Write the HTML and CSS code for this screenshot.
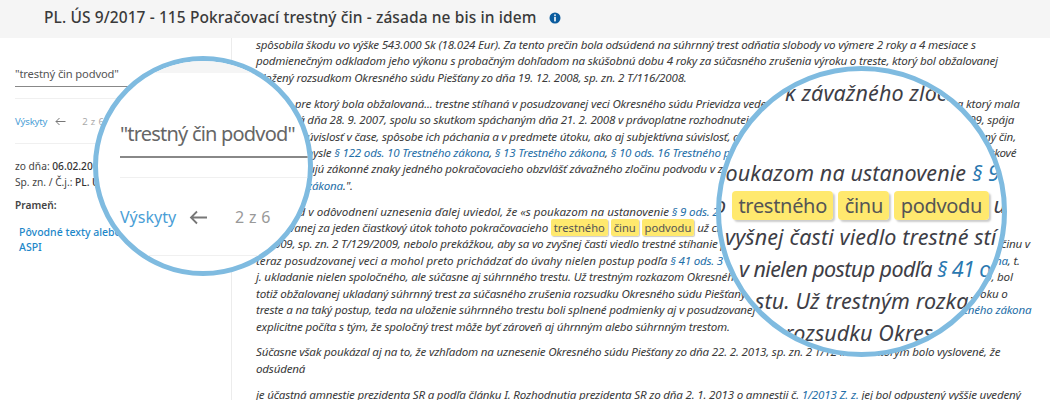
FILE: index.html
```html
<!DOCTYPE html>
<html lang="sk">
<head>
    <meta charset="UTF-8">
    <meta name="viewport" content="width=device-width, initial-scale=1.0">
    <title>PL. ÚS 9/2017</title>
    <link rel="stylesheet" href="styles.css">
</head>
<body>
    <div class="header">
        <h1>PL. ÚS 9/2017 - 115 Pokračovací trestný čin - zásada ne bis in idem</h1>
        <svg class="info" width="12" height="12" viewBox="0 0 12 12"><circle cx="6" cy="6" r="5.5" fill="#0b5c9e"/><rect x="5.2" y="2.4" width="1.6" height="1.5" fill="#fff"/><rect x="5.2" y="4.8" width="1.6" height="4.6" fill="#fff"/></svg>
    </div>

    <div class="main">
        <div class="sidebar">
            <div class="hledat">"trestný čin podvod"</div>
            <div class="vyskyty">
                <span class="vyskyty-nazov">Výskyty</span>
                <svg class="sipka" width="11" height="9" viewBox="0 0 11 9"><path d="M10.5 4.5H1M4.5 1 1 4.5 4.5 8" fill="none" stroke="#777" stroke-width="1"/></svg>
                <span class="pocet">2 z 6</span>
            </div>
            <div class="meta">
                <p>zo dňa: <b>06.02.2019</b></p>
                <p>Sp. zn. / Č.j.: <b>PL. ÚS 9/2017</b></p>
            </div>
            <div class="pramen">Prameň:</div>
            <div class="zdroje">
                <a>Pôvodné texty alebo texty</a>
                <a>ASPI</a>
            </div>
        </div>

        <div class="obsah">
            <p>spôsobila škodu vo výške 543.000 Sk (18.024 Eur). Za tento prečin bola odsúdená na súhrnný trest odňatia slobody vo výmere 2 roky a 4 mesiace s<br>
            podmienečným odkladom jeho výkonu s probačným dohľadom na skúšobnú dobu 4 roky za súčasného zrušenia výroku o treste, ktorý bol obžalovanej<br>
            uložený rozsudkom Okresného súdu Piešťany zo dňa 19. 12. 2008, sp. zn. 2 T/116/2008.</p>
            <p>Skutok, pre ktorý bola obžalovaná... trestne stíhaná v posudzovanej veci Okresného súdu Prievidza vedenej pre čin obzvlášť závažného zločinu a ktorý mala<br>
            spáchaná dňa 28. 9. 2007, spolu so skutkom spáchaným dňa 21. 2. 2008 v právoplatne rozhodnutej veci sp. zn. 2 T/116/2008 z 29. 1. 2009 z r. 2009, spája<br>
            a časová súvislosť v čase, spôsobe ich páchania a v predmete útoku, ako aj subjektívna súvislosť, a preto teda ide o jeden a ten istý pokračovací trestný čin,<br>
            skutky v zmysle <a>§ 122 ods. 10 Trestného zákona</a>, <a>§ 13 Trestného zákona</a>, <a>§ 10 ods. 16 Trestného poriadku</a>, pričom všetky jednotlivé tieto ich skutky čiastkové<br>
            teda vykazujú zákonné znaky jedného pokračovacieho obzvlášť závažného zločinu podvodu v zmysle<br>
            <a>Trestného zákona</a>.".</p>
            <p><span class="sirsie">Tento súd v odôvodnení uznesenia ďalej uviedol, že «s poukazom na ustanovenie</span> <a>§ 9 ods. 2</a> Trestného poriadku nie je právoplatné<br>
            obžalovanej za jeden čiastkový útok tohoto pokračovacieho <mark>trestného</mark> <mark>činu</mark> <mark>podvodu</mark> už citovaným rozkazom Okresného súdu zo dňa 29.<br>
            1. 2009, sp. zn. 2 T/129/2009, nebolo prekážkou, aby sa vo zvyšnej časti viedlo trestné stíhanie pre všetky zvyšné skutky tohto pokračovacieho trestného činu v<br>
            <span class="sirsie">teraz posudzovanej veci a mohol preto prichádzať do úvahy nielen postup podľa</span> <a>§ 41 ods. 3 Trestného zákona</a>, ale aj iný <a>§ 41 ods. 2 Trestného zákona</a>, t.<br>
            j. ukladanie nielen spoločného, ale súčasne aj súhrnného trestu. Už trestným rozkazom Okresného súdu Piešťany z dňa 29. 1. 2009, sp. zn. 2 T/129/09, bol<br>
            totiž obžalovanej ukladaný súhrnný trest za súčasného zrušenia rozsudku Okresného súdu Piešťany zo dňa 19. 12. 2008 sp. zn. 2 T/116/2008 vo výroku o<br>
            treste a na taký postup, teda na uloženie súhrnného trestu boli splnené podmienky aj v posudzovanej veci, keďže práve tu podľa <a>§ 41 ods. 3 Trestného zákona</a><br>
            explicitne počíta s tým, že spoločný trest môže byť zároveň aj úhrnným alebo súhrnným trestom.</p>
            <p>Súčasne však poukázal aj na to, že vzhľadom na uznesenie Okresného súdu Piešťany zo dňa 22. 2. 2013, sp. zn. 2 T/124/2011 ktorým bolo vyslovené, že<br>
            odsúdená</p>
            <p>je účastná amnestie prezidenta SR a podľa článku I. Rozhodnutia prezidenta SR zo dňa 2. 1. 2013 o amnestii č. <a>1/2013 Z. z.</a> jej bol odpustený vyššie uvedený</p>
        </div>
    </div>

    <div class="lupa lupa-hledat">
        <div class="lupa-vrch"></div>
        <div class="lupa-pole">"trestný čin podvod"</div>
        <div class="lupa-vyskyty">
            <span class="vyskyty-nazov">Výskyty</span>
            <svg width="19" height="15" viewBox="0 0 19 15"><path d="M18 7.5H2M8 1.5 2 7.5 8 13.5" fill="none" stroke="#777" stroke-width="1.8"/></svg>
            <span class="pocet">2 z 6</span>
        </div>
    </div>

    <div class="lupa lupa-text">
        <div class="riadok r1">k závažného zločin</div>
        <div class="riadok r2">poukazom na ustanovenie <a>§ 9</a></div>
        <div class="riadok r3">o <mark>trestného</mark> <mark>činu</mark> <mark>podvodu</mark> už</div>
        <div class="riadok r4">vyšnej časti viedlo trestné stí</div>
        <div class="riadok r5">v nielen postup podľa <a>§ 41 o</a></div>
        <div class="riadok r6">stu. Už trestným rozkaz</div>
        <div class="riadok r7">rozsudku Okres</div>
    </div>
</body>
</html>
```

FILE: styles.css
```css
* { margin: 0; padding: 0; box-sizing: border-box; }
body { position: relative; width: 1050px; height: 400px; overflow: hidden; background-color: #fff; color: #333; font-family: 'Noto Sans', sans-serif; }

.header { height: 38px; display: flex; align-items: center; gap: 13px; padding: 0 0 4px 44px; background-color: #f5f5f5; }
.header h1 { font-size: 15.5px; font-weight: 500; letter-spacing: 0.1px; color: #3a3a3a; white-space: nowrap; }
.info { margin-top: 1px; }

.main { display: flex; height: 362px; }
.sidebar { width: 232px; flex: none; padding: 28px 0 0 15px; border-right: 1px solid #ececec; font-size: 10.2px; color: #444; white-space: nowrap; }
.hledat { height: 21px; margin-right: -1px; border-bottom: 1px solid #888; font-size: 11.2px; letter-spacing: -0.15px; color: #555; }
.vyskyty { display: flex; align-items: center; height: 46px; margin-top: 11px; border-top: 1px solid #f0f0f0; border-bottom: 1px solid #f0f0f0; font-size: 9.6px; letter-spacing: -0.2px; }
.vyskyty-nazov { color: #4a9ed6; }
.sipka { margin: 1px 0 0 8px; }
.pocet { margin-left: 16px; color: #aaa; letter-spacing: 0.3px; }
.meta { margin-top: 15px; line-height: 15.5px; }
.meta b { font-weight: 500; color: #333; }
.pramen { margin-top: 8px; font-weight: 600; color: #444; }
.zdroje { margin: 13px 0 0 4px; display: flex; flex-direction: column; line-height: 15px; font-weight: 500; font-size: 10.5px; color: #1d87c9; }

.obsah { flex: 1; padding: 0 0 0 24px; font-size: 11.6px; font-style: italic; letter-spacing: -0.2px; line-height: 16.4px; color: #3a3a3a; white-space: nowrap; overflow: hidden; margin-top: -1px; }
.obsah p { margin-bottom: 9.5px; }
.obsah a { color: #1f6fa8; }
.sirsie { letter-spacing: 0; }
mark { padding: 1px 3px; font-size: 11.2px; background-color: #ffe96e; color: #555; border-radius: 2px; box-shadow: 1px 1px 1px #ccc; font-style: normal; letter-spacing: 0; }

/* lupy lezia nad obsahom */
.lupa { position: absolute; border: 5px solid #7fbbe0; border-radius: 50%; background-color: #fff; overflow: hidden; white-space: nowrap; }

.lupa-hledat { left: 93px; top: 56px; width: 220px; height: 220px; padding-left: 22px; color: #666; }
.lupa-vrch { height: 12px; margin-left: -22px; background-color: #f5f5f5; }
.lupa-pole { margin-top: 44px; height: 41px; border-bottom: 2px solid #888; font-size: 20px; letter-spacing: -0.8px; line-height: 34px; }
.lupa-vyskyty { display: flex; align-items: center; height: 79px; margin-top: 19px; border-top: 1px solid #f0f0f0; border-bottom: 1px solid #f0f0f0; font-size: 16px; }
.lupa-vyskyty svg { margin: 2px 0 0 13px; }
.lupa-vyskyty .pocet { margin-left: 27px; color: #999; }

.lupa-text { left: 716px; top: 66px; width: 291px; height: 291px; font-size: 21.5px; letter-spacing: 0.1px; font-style: italic; line-height: 32px; color: #3e3e46; }
.riadok a { color: #2a78b0; }
.riadok mark { padding: 1px 6.5px; margin-right: -1px; font-size: 20px; letter-spacing: -0.3px; line-height: 24px; border-radius: 4px; box-shadow: 2px 2px 2px #ccc; }
.r1 { margin: 6px 0 0 64px; }
.r2 { margin: 48px 0 0 -8px; }
.r3 { margin-left: -7px; }
.r4 { margin-left: 4px; }
.r5 { margin-left: 18px; letter-spacing: -0.6px; }
.r6 { margin-left: 34px; }
.r7 { margin-left: 64px; }
```
